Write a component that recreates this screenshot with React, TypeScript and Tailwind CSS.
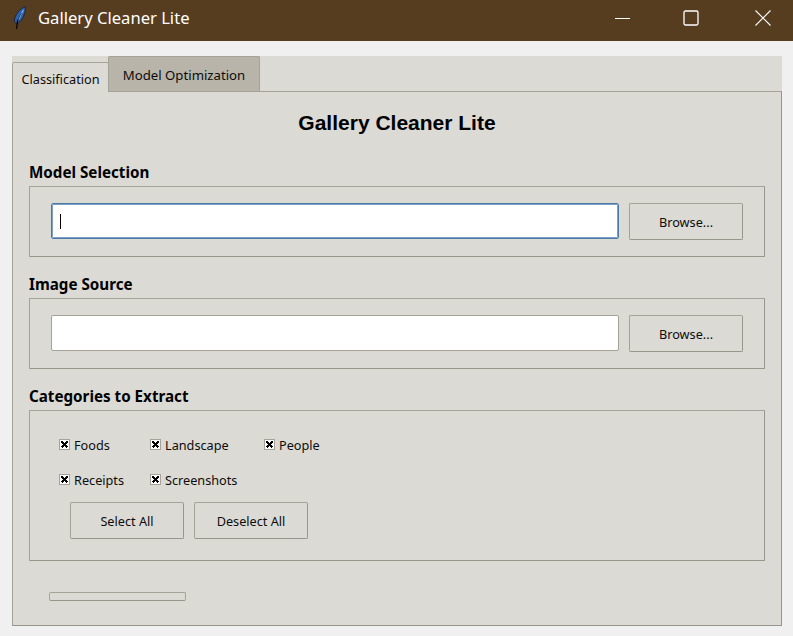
const uiFont = "font-['Noto_Sans','Open_Sans',sans-serif]";

const FeatherIcon = () => (
  <svg width="16" height="24" viewBox="0 0 16 24" className="shrink-0">
    <path d="M13.5 0.5 C8 2.5 3 8.5 2.5 14 C2.4 16 3.2 17.2 4.6 17.8 C9.5 15.5 13.5 9 13.5 0.5 Z" fill="#2f62a8" stroke="#14233c" strokeWidth="0.9" />
    <path d="M11.5 4 C9.5 7 8 10 7 13" fill="none" stroke="#8db6e4" strokeWidth="1.2" />
    <path d="M9.5 7 C7.5 10 6 13.5 5 17" fill="none" stroke="#17345f" strokeWidth="0.8" />
    <path d="M5.6 14 L4.6 23" fill="none" stroke="#000000" strokeWidth="1.2" />
  </svg>
);

const buttonClass =
  "w-[114px] h-[37px] shrink-0 pt-[2px] bg-[#dcdad5] border border-[#a5a298] border-b-[#98958b] border-r-[#98958b] rounded-[2px] text-[12.7px] text-[#0c0c0c]";

const BrowseButton = () => <button className={buttonClass}>Browse...</button>;

const Section = ({ label, children }: { label: string; children: React.ReactNode }) => (
  <div>
    <div className="h-[28px] text-[15.2px] font-bold leading-[29px] text-black">{label}</div>
    <div className="border border-[#a5a298] border-b-[#98958b] border-r-[#98958b] rounded-[1px]">{children}</div>
  </div>
);

const Check = ({ label, width }: { label: string; width: string }) => (
  <label className={`flex items-center gap-[4px] h-[20px] ${width}`}>
    <span className="flex items-center justify-center w-[11px] h-[11px] -mt-[3px] bg-white border border-[#a5a298]">
      <svg width="9" height="9" viewBox="0 0 9 9" shapeRendering="crispEdges">
        <path d="M1.5 1.5 L7.5 7.5 M7.5 1.5 L1.5 7.5" stroke="#000" strokeWidth="2.6" />
      </svg>
    </span>
    <span className="text-[12.7px] text-[#0c0c0c]">{label}</span>
  </label>
);

export default function App() {
  return (
    <div className={`w-[793px] h-[636px] bg-[#f0f0f0] overflow-hidden ${uiFont}`}>
      {/* title bar */}
      <div className="h-[41px] bg-[#573d20] flex items-center pl-[12px] pb-[5px]">
        <FeatherIcon />
        <span className="ml-[10px] text-[16.6px] text-white">Gallery Cleaner Lite</span>
        <div className="ml-auto flex items-center">
          <svg width="16" height="16" viewBox="0 0 16 16" className="mr-[52px]">
            <path d="M0 8.5 H15" stroke="#fff" strokeWidth="1" />
          </svg>
          <svg width="16" height="16" viewBox="0 0 16 16" className="mr-[56px]">
            <rect x="1" y="1" width="14" height="14" rx="1.5" fill="none" stroke="#fff" strokeWidth="1.3" />
          </svg>
          <svg width="16" height="16" viewBox="0 0 16 16" className="mr-[22px]">
            <path d="M0.5 0.5 L15.5 15.5 M15.5 0.5 L0.5 15.5" stroke="#fff" strokeWidth="1.1" />
          </svg>
        </div>
      </div>

      {/* notebook */}
      <div className="mx-[12px] mt-[15px] w-[770px]">
        <div className="h-[35px] bg-[#dcdad5] flex items-end">
          <div className="relative z-10 w-[97px] h-[30px] -mb-px bg-[#dcdad5] border border-b-0 border-[#a5a298] rounded-t-[2px] flex items-center justify-center pt-[5px] text-[12.7px] text-[#0c0c0c]">
            Classification
          </div>
          <div className="w-[152px] h-[35px] bg-[#b8b4a9] border border-b-0 border-[#a5a298] rounded-t-[2px] -ml-px flex items-center justify-center pt-[4px] text-[13.2px] text-[#0c0c0c]">
            Model Optimization
          </div>
        </div>
        <div className="h-[535px] bg-[#dcdad5] border border-[#a5a298] border-b-[#98958b] border-r-[#98958b] pl-[16px] pr-[16px]">
          <h1 className="h-[66px] pt-[19px] text-center font-['Liberation_Sans',sans-serif] text-[21px] leading-[24px] font-bold text-black">
            Gallery Cleaner Lite
          </h1>
          <div className="flex flex-col gap-[13px]">
            <Section label="Model Selection">
              <div className="h-[69px] flex items-start pt-[16px] pl-[21px] gap-[10px]">
                <div className="w-[568px] h-[36px] bg-white border border-[#4a7aa8] rounded-[2px] flex items-center pl-[8px] outline outline-[#7ba0c4] -outline-offset-2">
                  <div className="w-px h-[15px] bg-black" />
                </div>
                <BrowseButton />
              </div>
            </Section>
            <Section label="Image Source">
              <div className="h-[69px] flex items-start pt-[16px] pl-[21px] gap-[10px]">
                <div className="w-[568px] h-[36px] bg-white border border-[#a5a298] rounded-[2px]" />
                <BrowseButton />
              </div>
            </Section>
            <Section label="Categories to Extract">
              <div className="h-[149px] pt-[25px] pl-[29px]">
                <div className="flex">
                  <Check label="Foods" width="w-[91px]" />
                  <Check label="Landscape" width="w-[114px]" />
                  <Check label="People" width="w-[80px]" />
                </div>
                <div className="flex mt-[15px]">
                  <Check label="Receipts" width="w-[91px]" />
                  <Check label="Screenshots" width="w-[114px]" />
                </div>
                <div className="flex gap-[10px] mt-[11px] ml-[11px]">
                  <button className={buttonClass}>Select All</button>
                  <button className={buttonClass}>Deselect All</button>
                </div>
              </div>
            </Section>
          </div>
          <div className="mt-[31px] ml-[20px] w-[137px] h-[9px] bg-[#dcdad5] border border-[#a5a298] border-b-[#98958b] rounded-[2px]" />
        </div>
      </div>
    </div>
  );
}
